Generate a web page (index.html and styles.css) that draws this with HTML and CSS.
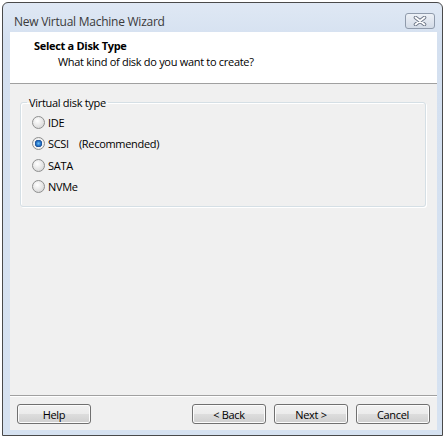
FILE: index.html
```html
<!DOCTYPE html>
<html>
<head>
<meta charset="utf-8">
<link rel="stylesheet" href="styles.css">
</head>
<body>
<div class="window">
  <div class="titlebar">
    <span class="title">New Virtual Machine Wizard</span>
    <span class="close"><svg width="14" height="10" viewBox="0 0 14 10"><path d="M2.5 1.5 L11.5 8.5 M11.5 1.5 L2.5 8.5" stroke="#6d7687" stroke-width="3.6" stroke-linecap="round"/><path d="M2.5 1.5 L11.5 8.5 M11.5 1.5 L2.5 8.5" stroke="#fff" stroke-width="1.8" stroke-linecap="round"/></svg></span>
  </div>
  <div class="client">
    <div class="header">
      <div class="h-title">Select a Disk Type</div>
      <div class="h-sub">What kind of disk do you want to create?</div>
    </div>
    <div class="body">
      <fieldset class="group">
        <legend>Virtual disk type</legend>
        <label class="radio"><span class="dot"></span>IDE</label>
        <label class="radio"><span class="dot checked"></span>SCSI<span class="gap"></span>(Recommended)</label>
        <label class="radio"><span class="dot"></span>SATA</label>
        <label class="radio"><span class="dot"></span>NVMe</label>
      </fieldset>
    </div>
    <div class="footer">
      <button class="btn">Help</button>
      <div class="spacer"></div>
      <button class="btn">&lt; Back</button>
      <button class="btn">Next &gt;</button>
      <button class="btn">Cancel</button>
    </div>
  </div>
</div>
</body>
</html>
```
FILE: styles.css
```css
html, body { margin: 0; padding: 0; background: #fff; }
body { font-family: "Open Sans", "Noto Sans", sans-serif; font-size: 11px; letter-spacing: -0.3px; color: #000; }
.window {
  margin: 2px 0 0 2px;
  width: 441px;
  height: 434px;
  box-sizing: border-box;
  border: 1px solid #4a4a4a;
  border-radius: 6px 6px 0 0;
  background: linear-gradient(#dfe8f4, #d4e0f0 40px, #d6e2f1);
  padding: 0 5px 5px 7px;
  display: flex;
  flex-direction: column;
}
.titlebar {
  height: 29px;
  box-sizing: border-box;
  display: flex;
  align-items: flex-start;
  justify-content: space-between;
  flex: none;
  padding-top: 9px;
}
.title { color: #3a3a3a; font-size: 12px; line-height: 16px; padding: 2px 0 0 4px; letter-spacing: -0.25px; }
.close {
  width: 28px; height: 14px;
  border: 1px solid #8f9aab;
  border-radius: 3px;
  background: linear-gradient(#edf1f7, #d3dbe7);
  display: flex; align-items: center; justify-content: center;
  margin-right: 2px;
  margin-top: 1px;
}
.client { flex: 1; background: #f0f0f0; display: flex; flex-direction: column; }
.header {
  background: #fff;
  height: 52px;
  box-sizing: border-box;
  padding: 7px 0 0 24px;
  border-bottom: 1px solid #a0a0a0;
  flex: none;
}
.h-title { font-weight: bold; font-size: 11px; line-height: 14px; }
.h-sub { padding-left: 24px; line-height: 17px; }
.body { flex: 1; padding: 11px 11px 0 10px; }
.group {
  margin: 0;
  border: 1px solid #d5dfe5;
  box-shadow: inset 1px 1px 0 #fff, 1px 1px 0 #fff;
  border-radius: 3px;
  padding: 2px 0 6px 11px;
  height: 112px;
  box-sizing: border-box;
}
.group legend { padding: 0 2px; margin-left: -5px; color: #000; }
.radio { display: flex; align-items: center; height: 21.3px; }
.gap { display: inline-block; width: 10px; }
.dot {
  width: 11px; height: 11px; border-radius: 50%;
  border: 1px solid #8e8f8f;
  background: radial-gradient(circle at 40% 35%, #fff, #e2e2e2 60%, #cfcfcf);
  margin-right: 3px;
  flex: none;
}
.dot.checked {
  background: radial-gradient(circle, #6fc1f2 0, #2b7bd0 2px, #1b4f95 3.5px, #f4f4f4 4px, #dcdcdc 100%);
}
.footer {
  height: 35px;
  box-sizing: border-box;
  flex: none;
  border-top: 1px solid #a0a0a0;
  box-shadow: inset 0 1px 0 #fff;
  display: flex;
  align-items: flex-start;
  padding: 8px 7px 0 7px;
  gap: 8px;
}
.spacer { flex: 1; }
.btn {
  width: 74px; height: 20px;
  font: inherit;
  letter-spacing: inherit;
  border: 1px solid #707070;
  border-radius: 3px;
  background: linear-gradient(#f2f2f2 0, #ebebeb 50%, #dddddd 51%, #cfcfcf 100%);
  box-shadow: inset 0 0 0 1px #fcfcfc;
  padding: 0;
  color: #000;
}
```
